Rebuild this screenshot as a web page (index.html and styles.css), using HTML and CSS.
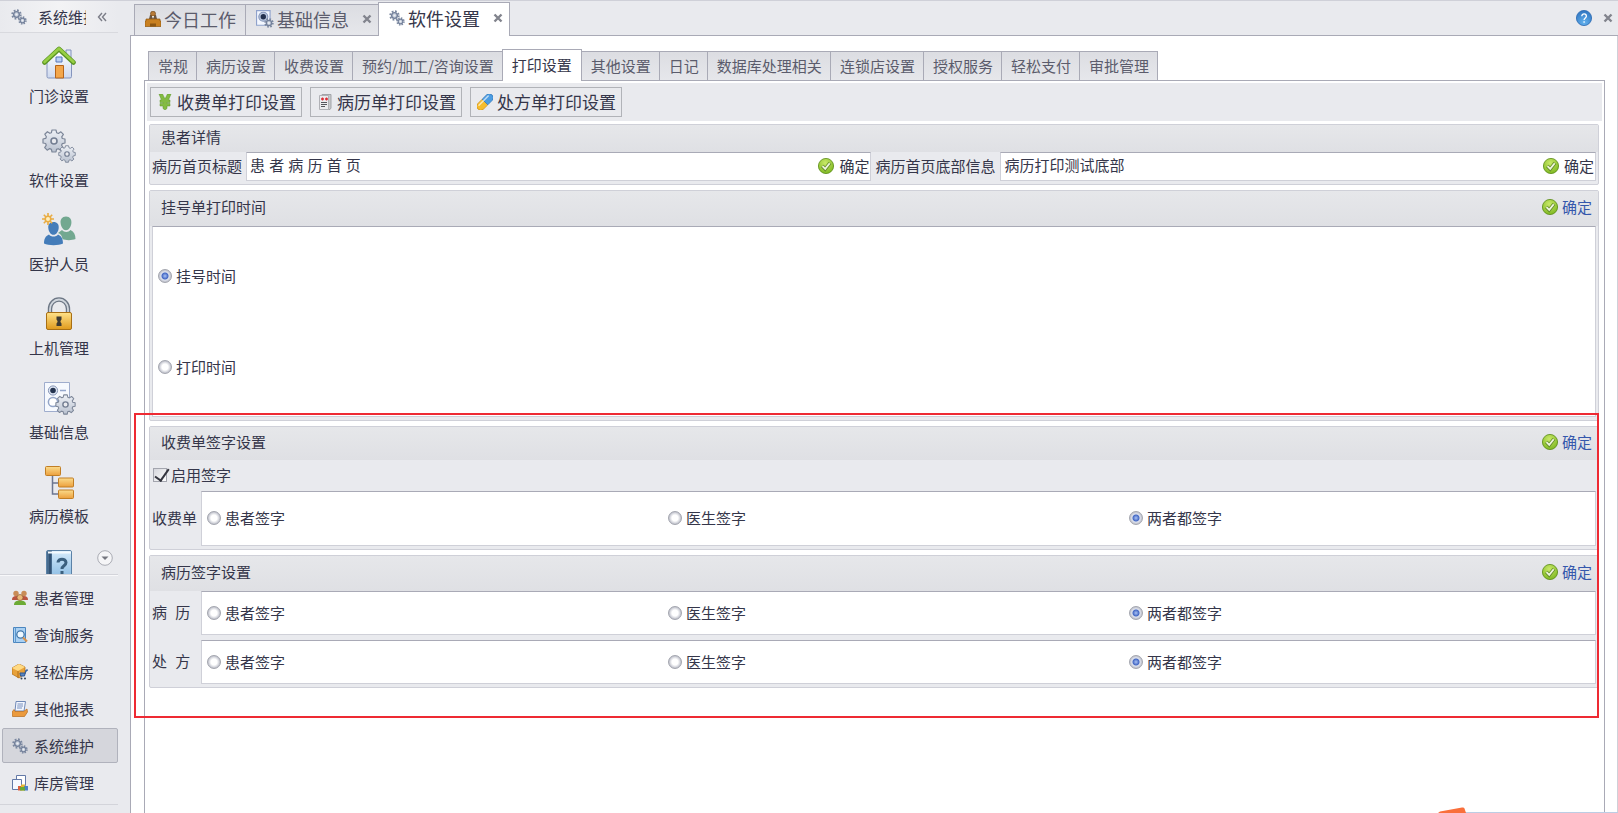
FILE: index.html
```html
<!DOCTYPE html>
<html lang="zh-CN">
<head>
<meta charset="utf-8">
<title>软件设置</title>
<meta name="viewport" content="width=device-width, initial-scale=1">
<link rel="stylesheet" href="styles.css">
</head>
<body>
<svg class="sprite" aria-hidden="true">
  <defs>
    <linearGradient id="g-steel" x1="0" y1="0" x2="0" y2="1"><stop offset="0" stop-color="#eef1f6"/><stop offset="1" stop-color="#b9c1cf"/></linearGradient>
    <linearGradient id="g-gold" x1="0" y1="0" x2="0" y2="1"><stop offset="0" stop-color="#ffe28a"/><stop offset="1" stop-color="#e09a1c"/></linearGradient>
    <linearGradient id="g-orange" x1="0" y1="0" x2="0" y2="1"><stop offset="0" stop-color="#fbdc8c"/><stop offset="1" stop-color="#ec9f3c"/></linearGradient>
    <linearGradient id="g-blue" x1="0" y1="0" x2="0" y2="1"><stop offset="0" stop-color="#d5ebfb"/><stop offset="1" stop-color="#7fb4df"/></linearGradient>
    <linearGradient id="g-wall" x1="0" y1="0" x2="0" y2="1"><stop offset="0" stop-color="#ffffff"/><stop offset="1" stop-color="#cdd8ee"/></linearGradient>
    <radialGradient id="g-green" cx=".45" cy=".3" r=".7"><stop offset="0" stop-color="#c9e968"/><stop offset="1" stop-color="#7fb822"/></radialGradient>
    <radialGradient id="g-help" cx=".5" cy=".8" r=".8"><stop offset="0" stop-color="#64b2ee"/><stop offset="1" stop-color="#2f74c0"/></radialGradient>
  </defs>
  <symbol id="gear" viewBox="-12 -12 24 24">
    <path d="M-2-11H2L2.700-8.200 4.400-7.500 6.900-9.200 9.400-6.600 7.700-4.200 8.300-2.500 11-2V2L8.300 2.600 7.600 4.300 9.200 6.800 6.600 9.300 4.200 7.700 2.500 8.400 2 11H-2L-2.600 8.400-4.300 7.600-6.800 9.200-9.300 6.600-7.700 4.200-8.400 2.500-11 2V-2L-8.300-2.600-7.600-4.300-9.200-6.800-6.600-9.300-4.200-7.700-2.600-8.300Z" fill="url(#g-steel)" stroke="#7c8698" stroke-width="1.200" stroke-linejoin="round"/>
    <circle r="3" fill="#e9eaee" stroke="#737e92" stroke-width="1.600"/>
  </symbol>
  <symbol id="gear-dark" viewBox="-12 -12 24 24">
    <circle r="9.300" fill="none" stroke="#7b88a0" stroke-width="4" stroke-dasharray="3.900 3.400"/>
    <circle r="6.200" fill="#c5cddb" stroke="#73809a" stroke-width="3"/>
    <circle r="2.400" fill="#eef0f4"/>
  </symbol>
  <symbol id="gears" viewBox="0 0 34 34"><use href="#gear" x="0" y="0" width="24" height="24"/><use href="#gear" x="16" y="16" width="18" height="18"/></symbol>
  <symbol id="gears-small" viewBox="0 0 16 16"><use href="#gear-dark" x="0" y="0" width="11" height="11"/><use href="#gear-dark" x="7" y="7" width="9" height="9"/></symbol>
  <symbol id="house" viewBox="0 0 34 34">
    <path d="M24 5h5v10h-5z" fill="#dfe5f3" stroke="#8091bb"/>
    <path d="M5 17 17 6 29.500 17V31.500a1.500 1.500 0 0 1-1.500 1.500H6.500A1.500 1.500 0 0 1 5 31.500Z" fill="url(#g-wall)" stroke="#8494bd"/>
    <path d="M14 12h6v5h-6z" fill="#bad0f5" stroke="#5676b9"/>
    <path d="M13.500 20.500h8V33h-8z" fill="#f3a64b" stroke="#b4641c"/>
    <path d="M2.500 17.500 17 4 31.500 17.500" fill="none" stroke="#5b9424" stroke-width="4.600" stroke-linejoin="round" stroke-linecap="round"/>
    <path d="M2.500 17 17 3.500 31.500 17" fill="none" stroke="#97cf45" stroke-width="2.600" stroke-linejoin="round" stroke-linecap="round"/>
  </symbol>
  <symbol id="people" viewBox="0 0 34 34">
    <g fill="#72a890"><path d="M24 3.500c4 0 5.800 3 5.400 6.500-.4 4-2.600 7.200-5.400 7.200s-5-3.200-5.400-7.200C18.200 6.500 20 3.500 24 3.500Z"/><path d="M20 17c2 2.500 6.500 2.500 8.500 0 3.500 1.500 5 4.500 5 9-3.500 1.500-10 1.500-13 0-.5-3.500-2-5-4.500-6Z"/></g>
    <g fill="#447cb9"><path d="M11.500 9c3.800 0 5.600 2.500 5.200 6-.4 3.800-2.400 6.800-5.200 6.800S6.700 18.800 6.300 15C6 11.500 7.700 9 11.500 9Z"/><path d="M7 21.500c2 2.800 7 2.800 9 0 3.600 1.500 5 4.500 5 9-4.500 2.200-14.500 2.200-19 0 0-4.500 1.400-7.500 5-9Z"/></g>
    <g stroke="#e9ac42" stroke-width="1.600"><path d="M6 0V12M0 6H12M1.800 1.800l8.400 8.400M10.200 1.800 1.800 10.200"/><circle cx="6" cy="6" r="2.800" fill="#ffefbd"/></g>
  </symbol>
  <symbol id="lock" viewBox="0 0 34 34">
    <path d="M8 16V12a9 9.500 0 0 1 18 0v4" fill="none" stroke="#6c7684" stroke-width="4.400"/>
    <path d="M8 16V12a9 9.500 0 0 1 18 0v4" fill="none" stroke="#d0d6dd" stroke-width="1.800"/>
    <rect x="4.500" y="15.500" width="25" height="17" rx="1.500" fill="url(#g-gold)" stroke="#a86f14"/>
    <path d="M14.500 19.500h5v3l-1 1.500v1l1 1.500v2.500h-5v-2.500l1-1.500v-1l-1-1.500z" fill="#3d3a33"/>
  </symbol>
  <symbol id="options" viewBox="0 0 34 34">
    <path d="M2.500 1.500h25v29h-25z" fill="#f6f9fe" stroke="#9fadcd"/>
    <circle cx="11" cy="9.500" r="4.600" fill="#dfe7f5" stroke="#8594b4"/><circle cx="11" cy="9.500" r="2.800" fill="#24334f"/>
    <circle cx="11" cy="21" r="4.600" fill="#fff" stroke="#93a5c8" stroke-width="1.500"/><path d="M18 9.500h6" stroke="#94a7cc" stroke-width="1.500"/>
    <use href="#gear" x="13" y="13" width="21" height="21"/>
  </symbol>
  <symbol id="options-small" viewBox="0 0 16 16">
    <path d="M.5.500h12v13H.5z" fill="#f3f7ff" stroke="#8fa2cc"/>
    <circle cx="6.500" cy="6" r="4" fill="#b9c6de" stroke="#8495b8"/><circle cx="6.500" cy="6" r="2.400" fill="#22304e"/>
    <use href="#gear-dark" x="7" y="7" width="9" height="9"/>
  </symbol>
  <symbol id="tree" viewBox="0 0 34 34">
    <path d="M10.500 9v20H17M10.500 18H17" fill="none" stroke="#6c7690" stroke-width="1.500"/>
    <g fill="url(#g-orange)" stroke="#c17e25"><rect x="3.500" y="1.500" width="15" height="9" rx="1"/><rect x="16.500" y="13" width="15" height="9" rx="1"/><rect x="16.500" y="25" width="15" height="8.500" rx="1"/></g>
  </symbol>
  <symbol id="book" viewBox="0 0 34 34">
    <rect x="4.500" y="1.500" width="25" height="32" rx="1.500" fill="url(#g-blue)" stroke="#5b82a7"/>
    <path d="M5 3a1.500 1.500 0 0 1 1.500-1.500H10V34H5Z" fill="#476b8e"/><path d="M8 2v32" stroke="#1f3d5c"/><path d="M6 3.500h23" stroke="#f4fafe" stroke-width="2"/>
    <path d="M16 13.500c0-4.500 8-4.500 8 0 0 3.500-4 3-4 6.500M20 22v3" fill="none" stroke="#3b607f" stroke-width="3"/>
  </symbol>
  <symbol id="crowd" viewBox="0 0 16 16">
    <path d="M0 10c0-3 1.500-4 4-4h8c2.500 0 4 1 4 4Z" fill="#bb5440"/><circle cx="4" cy="3.500" r="2.700" fill="#c98c56"/><circle cx="12" cy="3.500" r="2.700" fill="#c98c56"/>
    <path d="M2 15c0-3.500 2.500-4.500 6-4.500s6 1 6 4.500Z" fill="#6cab35"/><circle cx="8" cy="7.500" r="3" fill="#eab878" stroke="#915c31" stroke-width=".7"/>
  </symbol>
  <symbol id="search-doc" viewBox="0 0 16 16">
    <path d="M1.500.5h12v15h-12z" fill="#a9d0f2" stroke="#4c86bf"/><path d="M3.500.5v15" stroke="#5d98ce"/><circle cx="8.500" cy="7.500" r="3.700" fill="#eef8ff" stroke="#4277ab" stroke-width="1.300"/><path d="m11 10.500 4 4" stroke="#d7934e" stroke-width="2.200"/>
  </symbol>
  <symbol id="box-cart" viewBox="0 0 16 16">
    <path d="m0 4 7-4 6 3v7l-6 4-7-4Z" fill="#e8a23a" stroke="#ad6c16" stroke-width=".7"/><path d="m0 4 6 3 7-4-6-3Z" fill="#ffda83"/><path d="M6 7v7" stroke="#b46e17"/><path d="M16 6h-2l-1.500 6H8.500L8 9h5.500" fill="#5986c0" stroke="#2e5896"/><circle cx="9.500" cy="14.500" r="1" fill="#345"/><circle cx="13" cy="14.500" r="1" fill="#345"/>
  </symbol>
  <symbol id="tray" viewBox="0 0 16 16">
    <path d="M4 .5h9.500L12 10H3Z" fill="#f2f6fe" stroke="#6f88b6"/><path d="M5.500 3H11M5.200 5H11M5 7h5" stroke="#7890be"/><path d="m0 11 2-2.500 1 2h8.500L15 8l.5 3-3 4.500H.5Z" fill="#eb9a3d" stroke="#b66a1c" stroke-width=".7"/>
  </symbol>
  <symbol id="copies" viewBox="0 0 16 16">
    <path d="M4.500.5h9v10h-9z" fill="#fff" stroke="#6379a7"/><path d="M.5 4.500h9v10h-9z" fill="#f6f9ff" stroke="#6379a7"/><path d="M6 11h3.500v4.500H6z" fill="#dc6040"/><path d="M9 9.500h4v6H9z" fill="#e5b52e"/><path d="M12 11h4v4.500h-4z" fill="#4a81c8"/><path d="M8 12h5v3.500H8z" fill="#66a938"/>
  </symbol>
  <symbol id="desk" viewBox="0 0 16 16">
    <path d="m4 8 1-4h6l1 4Z" fill="#6a5745"/><circle cx="8" cy="2.700" r="2.500" fill="#b87b38" stroke="#704719" stroke-width=".7"/><path d="M7 5h2l-1 3Z" fill="#fff"/><path d="M1 8h14v2h1v5.500H0V10h1Z" fill="#c98020" stroke="#8d5712" stroke-width=".7"/><path d="M5 12.500h6v3H5Z" fill="#8d5712"/>
  </symbol>
  <symbol id="yen" viewBox="0 0 16 16">
    <path d="M2 0h3.500L8 5l2.500-5H14l-2.500 6H13v2.500h-3v1h3V12h-3v2.500L8 16l-2-1.500V12H3V9.500h3v-1H3V6h1.500Z" fill="#83bb42" stroke="#5c9726" stroke-width=".5"/>
  </symbol>
  <symbol id="record" viewBox="0 0 16 16">
    <path d="M5 .5h9V14l-1 1.500H5z" fill="#c8c9cc" stroke="#a3a4a9"/><path d="M2.500 1.500h9v14h-9z" fill="#ececef" stroke="#b0b1b6"/><path d="M4 5h3M5.500 3.500v3M8 5h3M9.500 3.500v3" stroke="#dc3038" stroke-width="1.300"/><path d="M4 8.500h6M4 10.500h6M4 12.500h4" stroke="#55565c"/>
  </symbol>
  <symbol id="pill" viewBox="0 0 16 16">
    <g transform="rotate(-45 8 8)"><path d="M8 4H2a4 4 0 0 0 0 8H8Z" fill="#f6bd2d" stroke="#c78614" stroke-width=".6"/><path d="M8 4h6a4 4 0 0 1 0 8H8Z" fill="#4b9ce2" stroke="#2b6fb2" stroke-width=".6"/><path d="M1.500 6h13" stroke="#fff" stroke-opacity=".65" stroke-width="1.500" stroke-linecap="round"/></g>
  </symbol>
  <symbol id="ok" viewBox="0 0 16 16">
    <circle cx="8" cy="8" r="7.600" fill="url(#g-green)" stroke="#598c14" stroke-width=".8"/><path d="m4.300 8 2.900 3 4.700-6" fill="none" stroke="#658d2c" stroke-width="3.500"/><path d="m4.500 8.200 2.700 2.600 4.500-5.600" fill="none" stroke="#eef5dc" stroke-width="1.800"/>
  </symbol>
  <symbol id="help" viewBox="0 0 16 16">
    <circle cx="8" cy="8" r="7.600" fill="url(#g-help)" stroke="#2968b1" stroke-width=".8"/><path d="M5.800 6.300c0-3.200 4.600-3.200 4.600 0C10.400 8 8.100 8 8.100 10M8.100 11.300v1.500" fill="none" stroke="#fff" stroke-width="1.300"/>
  </symbol>
  <symbol id="close" viewBox="0 0 10 10"><path d="m1.500 1.500 7 7M8.500 1.500l-7 7" stroke="#82848d" stroke-width="2.400"/></symbol>
  <symbol id="collapse" viewBox="0 0 10 10"><path d="M5 1 1.500 5 5 9M9 1 5.500 5 9 9" fill="none" stroke="#7b7d87" stroke-width="1.400"/></symbol>
  <symbol id="more" viewBox="0 0 16 16"><circle cx="8" cy="8" r="7.300" fill="#f5f5f7" stroke="#a9abb3"/><path d="M4.500 6.500h7L8 10Z" fill="#74767f"/></symbol>
</svg>

<div class="app">
  <aside class="sidebar">
    <header class="side-head">
      <svg class="ico"><use href="#gears-small"/></svg>
      <span class="side-title">系统维护</span>
      <button class="icon-btn" aria-label="收起"><svg class="ico-x"><use href="#collapse"/></svg></button>
    </header>
    <div class="launch">
      <button class="launch-item"><svg class="ico-lg"><use href="#house"/></svg>门诊设置</button>
      <button class="launch-item"><svg class="ico-lg"><use href="#gears"/></svg>软件设置</button>
      <button class="launch-item"><svg class="ico-lg"><use href="#people"/></svg>医护人员</button>
      <button class="launch-item"><svg class="ico-lg"><use href="#lock"/></svg>上机管理</button>
      <button class="launch-item"><svg class="ico-lg"><use href="#options"/></svg>基础信息</button>
      <button class="launch-item"><svg class="ico-lg"><use href="#tree"/></svg>病历模板</button>
      <button class="launch-item" aria-label="帮助"><svg class="ico-lg"><use href="#book"/></svg></button>
      <button class="icon-btn launch-more" aria-label="更多"><svg class="ico"><use href="#more"/></svg></button>
    </div>
    <nav class="modules">
      <button class="module"><svg class="ico"><use href="#crowd"/></svg>患者管理</button>
      <button class="module"><svg class="ico"><use href="#search-doc"/></svg>查询服务</button>
      <button class="module"><svg class="ico"><use href="#box-cart"/></svg>轻松库房</button>
      <button class="module"><svg class="ico"><use href="#tray"/></svg>其他报表</button>
      <button class="module is-active"><svg class="ico"><use href="#gears-small"/></svg>系统维护</button>
      <button class="module"><svg class="ico"><use href="#copies"/></svg>库房管理</button>
    </nav>
  </aside>

  <main class="main">
    <header class="topbar">
      <div class="doc-tab"><button class="tab-label"><svg class="ico"><use href="#desk"/></svg>今日工作</button></div>
      <div class="doc-tab"><button class="tab-label"><svg class="ico-md"><use href="#options-small"/></svg>基础信息</button><button class="icon-btn" aria-label="关闭基础信息"><svg class="ico-x"><use href="#close"/></svg></button></div>
      <div class="doc-tab is-active"><button class="tab-label"><svg class="ico"><use href="#gears-small"/></svg>软件设置</button><button class="icon-btn" aria-label="关闭软件设置"><svg class="ico-x"><use href="#close"/></svg></button></div>
      <div class="window-tools">
        <button class="icon-btn" aria-label="帮助"><svg class="ico"><use href="#help"/></svg></button>
        <button class="icon-btn" aria-label="关闭"><svg class="ico-x"><use href="#close"/></svg></button>
      </div>
    </header>

    <div class="workspace">
      <div class="tabs" role="tablist">
        <button class="tab" role="tab">常规</button>
        <button class="tab" role="tab">病历设置</button>
        <button class="tab" role="tab">收费设置</button>
        <button class="tab" role="tab">预约/加工/咨询设置</button>
        <button class="tab is-active" role="tab" aria-selected="true">打印设置</button>
        <button class="tab" role="tab">其他设置</button>
        <button class="tab" role="tab">日记</button>
        <button class="tab" role="tab">数据库处理相关</button>
        <button class="tab" role="tab">连锁店设置</button>
        <button class="tab" role="tab">授权服务</button>
        <button class="tab" role="tab">轻松支付</button>
        <button class="tab" role="tab">审批管理</button>
      </div>

      <div class="page">
        <div class="toolbar">
          <button class="tool"><svg class="ico"><use href="#yen"/></svg>收费单打印设置</button>
          <button class="tool"><svg class="ico"><use href="#record"/></svg>病历单打印设置</button>
          <button class="tool"><svg class="ico"><use href="#pill"/></svg>处方单打印设置</button>
        </div>

        <div class="groups">
          <section class="group">
            <header class="group-head compact"><h2>患者详情</h2></header>
            <div class="fields">
              <label for="home-title">病历首页标题</label>
              <div class="field"><input id="home-title" type="text" value="患 者 病 历 首 页"><button class="confirm"><svg class="ico"><use href="#ok"/></svg>确定</button></div>
              <label for="home-footer">病历首页底部信息</label>
              <div class="field"><input id="home-footer" type="text" value="病历打印测试底部"><button class="confirm"><svg class="ico"><use href="#ok"/></svg>确定</button></div>
            </div>
          </section>

          <section class="group">
            <header class="group-head"><h2>挂号单打印时间</h2><button class="confirm link"><svg class="ico"><use href="#ok"/></svg>确定</button></header>
            <div class="well stacked">
              <label class="choice"><input type="radio" name="print-time" checked>挂号时间</label>
              <label class="choice"><input type="radio" name="print-time">打印时间</label>
            </div>
          </section>

          <div class="signing">
            <section class="group">
              <header class="group-head medium"><h2>收费单签字设置</h2><button class="confirm link"><svg class="ico"><use href="#ok"/></svg>确定</button></header>
              <label class="choice enable"><input type="checkbox" checked>启用签字</label>
              <div class="sign-row tall">
                <span class="sign-name">收费单</span>
                <div class="well options">
                  <label class="choice"><input type="radio" name="bill">患者签字</label>
                  <label class="choice"><input type="radio" name="bill">医生签字</label>
                  <label class="choice"><input type="radio" name="bill" checked>两者都签字</label>
                </div>
              </div>
            </section>

            <section class="group">
              <header class="group-head"><h2>病历签字设置</h2><button class="confirm link"><svg class="ico"><use href="#ok"/></svg>确定</button></header>
              <div class="sign-row">
                <span class="sign-name">病&nbsp;&nbsp;历</span>
                <div class="well options">
                  <label class="choice"><input type="radio" name="record">患者签字</label>
                  <label class="choice"><input type="radio" name="record">医生签字</label>
                  <label class="choice"><input type="radio" name="record" checked>两者都签字</label>
                </div>
              </div>
              <div class="sign-row">
                <span class="sign-name">处&nbsp;&nbsp;方</span>
                <div class="well options">
                  <label class="choice"><input type="radio" name="rx">患者签字</label>
                  <label class="choice"><input type="radio" name="rx">医生签字</label>
                  <label class="choice"><input type="radio" name="rx" checked>两者都签字</label>
                </div>
              </div>
            </section>
          </div>
        </div>
      </div>
    </div>
    <div class="status-edge"></div>
    <svg class="float-tip" viewBox="0 0 28 6" aria-hidden="true"><path d="M0 6 2 4.500 24 .5q2-.5 2.500 1L28 6Z" fill="#f96f3b"/></svg>
  </main>
</div>
</body>
</html>
```
FILE: styles.css
```css
:root {
  --bg: #e9eaee;
  --line: #a9aab6;
  --soft: #cfd0d8;
  --text: #35364a;
}

* { box-sizing: border-box; }

body {
  margin: 0;
  background: var(--bg);
  color: var(--text);
  font: 15px/20px "Noto Sans CJK SC", sans-serif;
}

button, input { font: inherit; color: inherit; }
button { border: 0; padding: 0; background: none; white-space: nowrap; }
h2 { margin: 0; font-size: 15px; font-weight: 400; }

.sprite { position: absolute; width: 0; height: 0; }
.ico { width: 16px; height: 16px; flex: none; display: block; }
.ico-md { width: 18px; height: 18px; flex: none; display: block; }
.ico-x { width: 10px; height: 10px; flex: none; display: block; }
.ico-lg { width: 34px; height: 34px; flex: none; }
.icon-btn { display: block; flex: none; }

.app {
  display: flex;
  height: 100vh;
  overflow: hidden;
  border-top: 1px solid var(--soft);
}

/* Sidebar */
.sidebar {
  flex: none;
  width: 130px;
  padding-right: 12px;
  display: flex;
  flex-direction: column;
}
.side-head {
  display: flex;
  align-items: center;
  height: 32px;
  padding-left: 11px;
  background: linear-gradient(90deg, var(--bg), #f3f3f5 50%, var(--bg));
  border-bottom: 1px solid #d8d9de;
}
.side-title { width: 48px; margin: 0 11px; overflow: hidden; white-space: nowrap; }

.launch {
  position: relative;
  flex: 1;
  min-height: 0;
  overflow: hidden;
  padding-top: 12px;
}
.launch-item {
  display: flex;
  flex-direction: column;
  align-items: center;
  gap: 7px;
  width: 100%;
  height: 61px;
  margin-bottom: 23px;
}
.launch-more { position: absolute; right: 5px; bottom: 8px; }

.modules {
  flex: none;
  margin-bottom: 8px;
  padding: 5px 0 2px 2px;
  border-top: 1px solid #d3d4da;
  border-bottom: 1px solid #d3d4da;
  box-shadow: inset 0 1px #f8f8fa;
}
.module {
  display: flex;
  align-items: center;
  gap: 6px;
  width: 100%;
  height: 35px;
  margin-bottom: 2px;
  padding-left: 9px;
  border: 1px solid transparent;
  border-radius: 2px;
}
.module.is-active { background: #d5d6dc; border-color: #b0b2bc; }

/* Document tabs */
.main {
  position: relative;
  flex: 1;
  min-width: 0;
  display: flex;
  flex-direction: column;
}
.topbar {
  display: flex;
  align-items: flex-end;
  flex: none;
  height: 35px;
  padding-left: 4px;
  border-bottom: 1px solid var(--line);
}
.doc-tab {
  display: flex;
  align-items: center;
  gap: 13px;
  height: 31px;
  padding: 0 6px 2px 10px;
  border: 1px solid var(--line);
  border-width: 1px 0 0 1px;
  background: linear-gradient(#dcdde2, #e6e7eb);
  color: #5b5c6c;
}
.doc-tab:first-child { padding-right: 9px; }
.doc-tab.is-active {
  height: 34px;
  margin-bottom: -1px;
  padding-bottom: 4px;
  border-right-width: 1px;
  background: #fff;
  color: var(--text);
}
.tab-label { display: flex; align-items: center; gap: 3px; font-size: 18px; line-height: 24px; }
.window-tools {
  display: flex;
  align-items: center;
  gap: 11px;
  height: 34px;
  margin-left: auto;
  padding-right: 5px;
}

.workspace {
  flex: 1;
  min-height: 0;
  display: flex;
  flex-direction: column;
  padding: 13px 12px 0 13px;
  background: #fff;
  border: 1px solid var(--line);
  border-width: 0 1px;
  border-right-color: var(--soft);
}

/* Settings tabs */
.tabs { display: flex; align-items: flex-end; height: 31px; padding-left: 4px; }
.tab {
  height: 29px;
  padding: 0 8px 0 9px;
  border: 1px solid var(--line);
  border-width: 1px 0 0 1px;
  background: linear-gradient(#dcdde2, #e6e7eb);
  color: #5b5c6c;
}
.tab:last-child { border-right-width: 1px; }
.tab.is-active {
  position: relative;
  height: 32px;
  margin: 0 -1px -1px 0;
  padding: 0 9px 1px;
  border-right-width: 1px;
  background: #fff;
  color: var(--text);
}

.page {
  flex: 1;
  min-height: 0;
  padding: 2px 2px 0;
  border: 1px solid var(--line);
  border-bottom: 0;
}
.toolbar {
  display: flex;
  gap: 8px;
  padding: 4px 3px;
  background: var(--bg);
}
.tool {
  display: flex;
  align-items: center;
  gap: 4px;
  height: 30px;
  padding: 0 5px 1px 6px;
  border: 1px solid #b1b3b8;
  font-size: 17px;
  line-height: 24px;
}

/* Group boxes */
.groups, .signing { display: flex; flex-direction: column; gap: 5px; }
.groups { padding: 3px 3px 0 2px; }
.group {
  padding: 0 2px 3px;
  border: 1px solid var(--soft);
  border-radius: 2px;
  background: var(--bg);
}
.group-head {
  display: flex;
  align-items: center;
  justify-content: space-between;
  height: 35px;
  margin: 0 -2px;
  padding: 0 6px 3px 11px;
  background: linear-gradient(#e6e7ea, #dfe0e4);
}
.group-head.medium { height: 33px; }
.group-head.compact { height: 27px; }

.confirm { display: flex; align-items: center; gap: 5px; }
.confirm.link { gap: 4px; color: #3557ac; }

.fields { display: flex; align-items: stretch; }
.fields label { align-self: center; padding: 0 4px 2px 0; flex: none; white-space: nowrap; }
.fields .field + label { padding: 0 5px 2px 4px; }
.field {
  display: flex;
  flex: 627 1 0;
  min-width: 0;
  height: 29px;
  padding: 0 1px 2px 0;
  background: #fff;
  border: 1px solid var(--soft);
  border-top-color: var(--line);
}
.field:last-child { flex-grow: 597; }
.field input {
  flex: 1;
  min-width: 0;
  padding: 0 3px;
  border: 0;
  outline: 0;
  background: none;
  font-family: "Liberation Sans", "Noto Sans CJK SC", sans-serif;
}

.well { background: #fff; border: 1px solid var(--soft); border-top-color: var(--line); }
.well.stacked {
  display: grid;
  grid-auto-rows: 91px;
  padding: 3px 5px 4px;
}
.well.options {
  flex: 1;
  display: grid;
  grid-template-columns: repeat(3, 1fr);
  padding: 0 5px 1px;
}
.choice { display: flex; align-items: center; gap: 4px; }
.choice.enable { height: 31px; padding: 0 0 2px 1px; }

.sign-row { display: flex; height: 44px; }
.sign-row + .sign-row { margin-top: 5px; }
.sign-row.tall { height: 55px; }
.sign-name {
  flex: none;
  align-self: center;
  width: 49px;
  font-family: "Liberation Sans", "Noto Sans CJK SC", sans-serif;
}

.choice input {
  appearance: none;
  flex: none;
  width: 14px;
  height: 14px;
  margin: 0;
}
.choice input[type="radio"] {
  border: 1px solid #a3a5ae;
  border-radius: 50%;
  background: radial-gradient(circle, #fff 3px, #c0c2cc 6px);
}
.choice input[type="radio"]:checked {
  background: radial-gradient(circle at 50% 50%, #a9c2f5 0, #4468c4 3px, #dfe3ee 4px, #c0c2cc 6px);
}
.choice input[type="checkbox"] {
  border: 1px solid #a3a5ae;
  background: linear-gradient(135deg, #d5d6dc, #fff);
  position: relative;
}
.choice input[type="checkbox"]::after {
  content: "";
  position: absolute;
  left: 4px;
  top: -3px;
  width: 6px;
  height: 13px;
  border: solid #34353f;
  border-width: 0 2px 2px 0;
  transform: rotate(35deg);
}

/* Highlight frame around the signature settings */
.signing { position: relative; }
.signing::after {
  content: "";
  position: absolute;
  inset: -13px 0 -30px -15px;
  border: 2px solid #ee2a33;
  pointer-events: none;
}

.status-edge { position: absolute; right: 0; bottom: 0; width: 154px; height: 1px; background: #bccde4; }
.float-tip { position: absolute; right: 152px; bottom: 0; width: 28px; height: 6px; }
```
